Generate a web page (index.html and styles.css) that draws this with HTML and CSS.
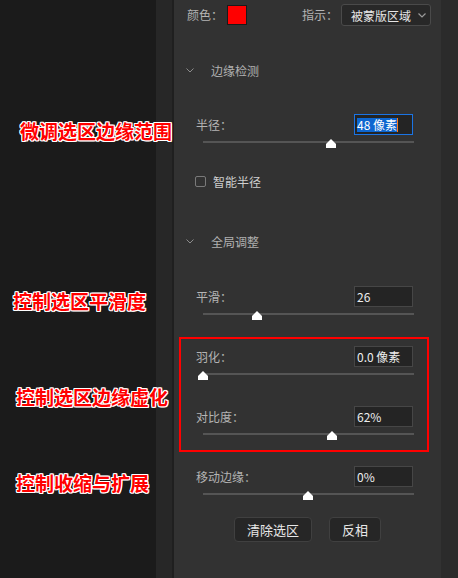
FILE: index.html
```html
<!DOCTYPE html>
<html lang="zh-CN">

<head>
    <title>选择并遮住</title>
    <link rel="stylesheet" href="styles.css">
</head>

<body>

    <div class="workspace">
        <!-- Annotated canvas -->
        <div class="canvas">
            <p class="note note-radius">微调选区边缘范围</p>
            <p class="note note-smooth">控制选区平滑度</p>
            <p class="note note-feather">控制选区边缘虚化</p>
            <p class="note note-shift">控制收缩与扩展</p>
        </div>

        <div class="gutter"></div>

        <!-- Properties panel -->
        <div class="panel">
            <div class="row-top">
                <span class="label">颜色：</span>
                <span class="swatch"></span>
                <span class="label view-label">指示：</span>
                <div class="select">
                    <span>被蒙版区域</span>
                    <svg width="8" height="5" viewBox="0 0 8 5"><path d="M0.5 0.5 L4 4 L7.5 0.5" fill="none" stroke="#9a9a9a" stroke-width="1.2"/></svg>
                </div>
            </div>

            <!-- Edge detection -->
            <div class="section-head">
                <svg width="8" height="5" viewBox="0 0 8 5"><path d="M0.5 0.5 L4 4 L7.5 0.5" fill="none" stroke="#8c8c8c" stroke-width="1"/></svg>
                <span>边缘检测</span>
            </div>

            <div class="field">
                <div class="field-row">
                    <span class="label">半径：</span>
                    <div class="value focused"><span class="sel">48 像素</span><span class="caret"></span></div>
                </div>
                <div class="slider">
                    <div class="track"></div>
                    <span class="thumb" style="left: 60.7%"><svg width="10" height="9" viewBox="0 0 10 9"><path d="M5 0 L10 5 V9 H0 V5 Z" fill="#fff"/></svg></span>
                </div>
            </div>

            <div class="check-row">
                <span class="checkbox"></span>
                <span>智能半径</span>
            </div>

            <!-- Global refinements -->
            <div class="section-head section-global">
                <svg width="8" height="5" viewBox="0 0 8 5"><path d="M0.5 0.5 L4 4 L7.5 0.5" fill="none" stroke="#8c8c8c" stroke-width="1"/></svg>
                <span>全局调整</span>
            </div>

            <div class="field field-smooth">
                <div class="field-row">
                    <span class="label">平滑：</span>
                    <div class="value">26</div>
                </div>
                <div class="slider">
                    <div class="track"></div>
                    <span class="thumb" style="left: 25.6%"><svg width="10" height="9" viewBox="0 0 10 9"><path d="M5 0 L10 5 V9 H0 V5 Z" fill="#fff"/></svg></span>
                </div>
            </div>

            <div class="highlight">
                <div class="field">
                    <div class="field-row">
                        <span class="label">羽化：</span>
                        <div class="value">0.0 像素</div>
                    </div>
                    <div class="slider">
                        <div class="track"></div>
                        <span class="thumb" style="left: 0%"><svg width="10" height="9" viewBox="0 0 10 9"><path d="M5 0 L10 5 V9 H0 V5 Z" fill="#fff"/></svg></span>
                    </div>
                </div>
                <div class="field field-contrast">
                    <div class="field-row">
                        <span class="label">对比度：</span>
                        <div class="value">62%</div>
                    </div>
                    <div class="slider">
                        <div class="track"></div>
                        <span class="thumb" style="left: 61.1%"><svg width="10" height="9" viewBox="0 0 10 9"><path d="M5 0 L10 5 V9 H0 V5 Z" fill="#fff"/></svg></span>
                    </div>
                </div>
            </div>

            <div class="field field-shift">
                <div class="field-row">
                    <span class="label">移动边缘：</span>
                    <div class="value">0%</div>
                </div>
                <div class="slider">
                    <div class="track"></div>
                    <span class="thumb" style="left: 49.8%"><svg width="10" height="9" viewBox="0 0 10 9"><path d="M5 0 L10 5 V9 H0 V5 Z" fill="#fff"/></svg></span>
                </div>
            </div>

            <div class="actions">
                <button class="btn">清除选区</button>
                <button class="btn">反相</button>
            </div>
        </div>

        <div class="side"></div>
    </div>

</body>

</html>
```

FILE: styles.css
```css
/* Base Reset */
* {
    box-sizing: border-box;
    margin: 0;
    padding: 0;
}

body {
    background-color: #1b1b1b;
    font-family: "Noto Sans CJK SC", "Noto Sans", sans-serif;
    overflow: hidden;
}

.workspace {
    display: flex;
    height: 578px;
}

/* Canvas annotations */
.canvas {
    width: 156px;
    flex-shrink: 0;
}

.note {
    font-size: 19px;
    font-weight: bold;
    line-height: 24px;
    color: #ff0000;
    white-space: nowrap;
    position: relative;
    z-index: 1;
    text-shadow: 1px 0 #fff, -1px 0 #fff, 0 1px #fff, 0 -1px #fff,
        1px 1px #fff, -1px -1px #fff, 1px -1px #fff, -1px 1px #fff;
}

.note-radius {
    margin: 119px 0 0 20px;
}

.note-smooth {
    margin: 146px 0 0 13px;
}

.note-feather {
    margin: 72px 0 0 16px;
}

.note-shift {
    margin: 62px 0 0 16px;
}

.gutter {
    width: 18px;
    flex-shrink: 0;
    background-color: #272727;
    border-right: 2px solid #1f1f1f;
}

.side {
    flex: 1;
    background-color: #2b2b2b;
}

/* Panel */
.panel {
    width: 267px;
    flex-shrink: 0;
    background-color: #323232;
    padding-top: 4px;
    font-size: 12px;
    color: #b4b4b4;
}

.label {
    font-size: 12px;
    line-height: 14px;
    color: #b4b4b4;
    white-space: nowrap;
}

.row-top {
    display: flex;
    align-items: center;
    height: 22px;
    padding-left: 13px;
}

.swatch {
    width: 20px;
    height: 20px;
    margin-left: 4px;
    background-color: #ff0000;
    border: 1px solid #1a1a1a;
}

.view-label {
    margin-left: 55px;
}

.select {
    display: flex;
    align-items: center;
    justify-content: space-between;
    width: 90px;
    height: 22px;
    margin-left: 3px;
    padding: 0 4px 0 9px;
    background-color: #282828;
    border: 1px solid #4a4a4a;
    border-radius: 3px;
    color: #e6e6e6;
    font-size: 12px;
}

/* Section headers */
.section-head {
    display: flex;
    align-items: center;
    gap: 17px;
    height: 20px;
    margin-top: 34px;
    padding-left: 12px;
    color: #b0b0b0;
    font-size: 12px;
}

.section-global {
    margin-top: 44px;
}

/* Fields with sliders */
.field {
    margin-top: 34px;
    padding: 0 28px 0 22px;
}

.field-smooth {
    margin-top: 35px;
}

.field-shift {
    margin-top: 14px;
}

.field-row {
    display: flex;
    justify-content: space-between;
    align-items: center;
    height: 21px;
}

.value {
    display: flex;
    align-items: center;
    width: 59px;
    height: 21px;
    padding-left: 2px;
    background-color: #242424;
    border: 1px solid #464646;
    color: #ededed;
    font-size: 12px;
    white-space: nowrap;
}

.value.focused {
    border-color: #1b74e4;
}

.sel {
    background-color: #0d66d0;
    color: #fff;
    line-height: 14px;
}

.caret {
    width: 1px;
    height: 14px;
    background-color: #ff7a1a;
}

.slider {
    position: relative;
    display: flex;
    align-items: center;
    height: 14px;
    margin: 0 -1px 0 7px;
}

.track {
    width: 100%;
    height: 2px;
    background-color: #555;
}

.thumb {
    position: absolute;
    top: 4px;
    margin-left: -5px;
    display: flex;
}

/* Checkbox */
.check-row {
    display: flex;
    align-items: center;
    gap: 7px;
    height: 12px;
    margin-top: 26px;
    padding-left: 21px;
    color: #cfcfcf;
    font-size: 12px;
}

.checkbox {
    width: 11px;
    height: 11px;
    border: 1px solid #7a7a7a;
    border-radius: 2px;
}

/* Annotated group */
.highlight {
    margin: 16px 12px 0 5px;
    padding: 7px 14px 9px 15px;
    border: 2px solid #ff0000;
}

.highlight .field {
    margin-top: 0;
    padding: 0;
}

.highlight .field-contrast {
    margin-top: 25px;
}

/* Buttons */
.actions {
    display: flex;
    justify-content: center;
    gap: 17px;
    margin-top: 16px;
}

.btn {
    height: 25px;
    padding: 0 12px;
    background-color: #262626;
    border: 1px solid #404040;
    border-radius: 4px;
    color: #e8e8e8;
    font-family: inherit;
    font-size: 13px;
}
```
